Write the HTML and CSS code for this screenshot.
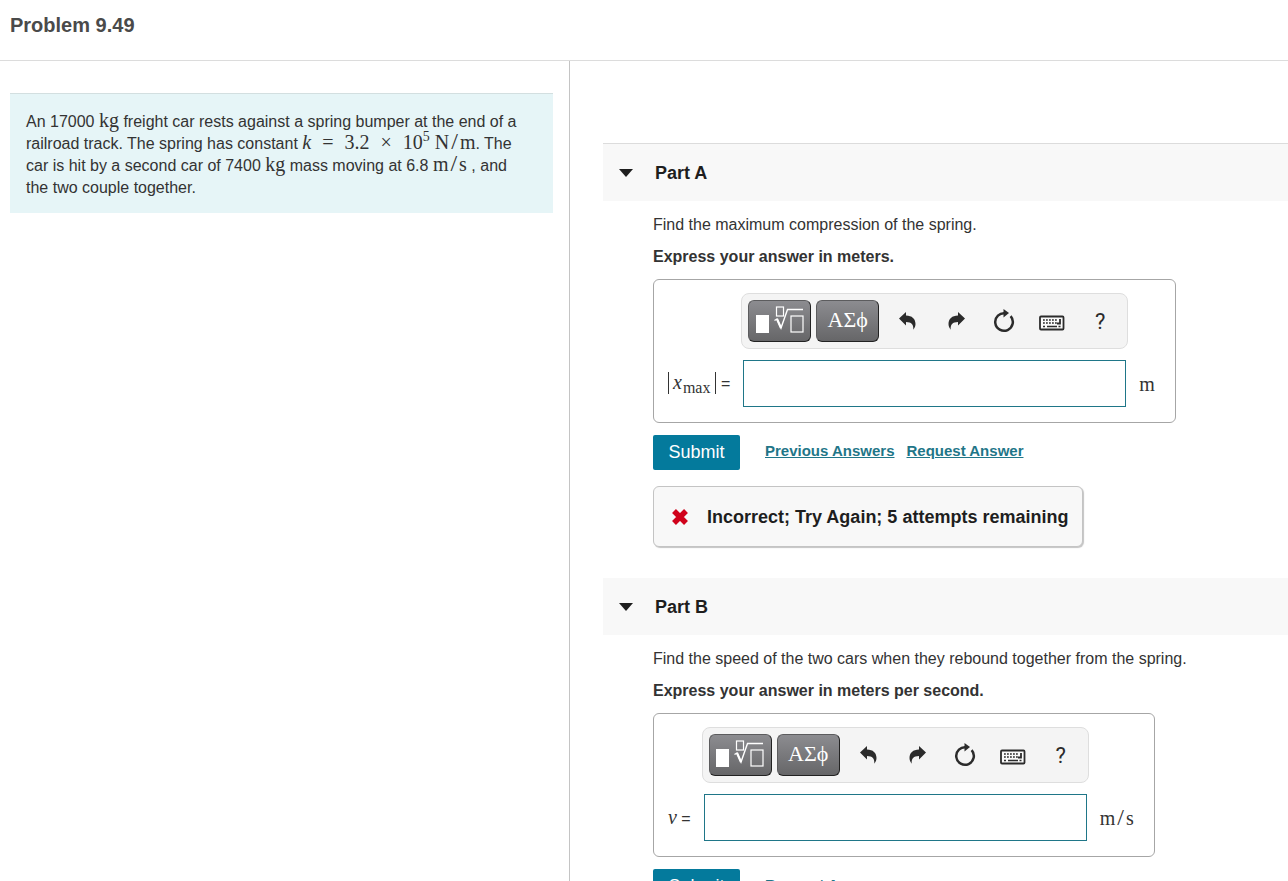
FILE: index.html
```html
<!DOCTYPE html>
<html lang="en">
<head>
  <meta charset="UTF-8" />
  <meta name="viewport" content="width=device-width, initial-scale=1.0" />
  <title>Problem 9.49</title>
  <link rel="stylesheet" href="styles.css">
</head>

<body>
  <!-- shared icons -->
  <svg class="sprite" aria-hidden="true">
    <symbol id="i-root" viewBox="0 0 48 28">
      <rect x="0" y="9" width="13" height="18" fill="#fff" />
      <rect x="20.5" y="1" width="7" height="9" fill="none" stroke="#fff" stroke-width="1.2" />
      <path d="M18.5 14.5l2.5-1.5 4 9L31.500 3.500H47" fill="none" stroke="#fff" stroke-width="1.4" />
      <path d="M21 13l4 9" stroke="#fff" stroke-width="2.2" />
      <rect x="35" y="10" width="12" height="16" fill="none" stroke="#fff" stroke-width="1.2" />
    </symbol>
    <symbol id="i-undo" viewBox="0 0 20 20">
      <path d="M1 7.500L8 1v3.500c6 0 9.500 3.500 9.500 8.500 0 2-.8 4-2.200 5.700.5-5-1.800-7.700-7.300-7.700v3.500z" fill="#2b2b2b" />
    </symbol>
    <symbol id="i-redo" viewBox="0 0 20 20">
      <path d="M19 7.500L12 1v3.500c-6 0-9.500 3.500-9.500 8.500 0 2 .8 4 2.200 5.700-.5-5 1.800-7.700 7.300-7.700v3.500z" fill="#2b2b2b" />
    </symbol>
    <symbol id="i-reset" viewBox="0 0 22 24">
      <path d="M16.500 6.100A8.800 8.800 0 1 1 11 4.200" fill="none" stroke="#2b2b2b" stroke-width="2.500" transform="rotate(10 11 13)" />
      <path d="M10.500 0l5.500 4-5.500 4.500z" fill="#2b2b2b" />
    </symbol>
    <symbol id="i-keyboard" viewBox="0 0 26 16">
      <rect x="1" y="1.500" width="23.500" height="13" rx="1" fill="#fafafa" stroke="#2b2b2b" stroke-width="1.800" />
      <path d="M4 5h15M4 8h15" stroke="#2b2b2b" stroke-width="1.600" stroke-dasharray="1.800 1.200" />
      <path d="M4 11.500h2M8 11.500h10M19.500 11.500h2" stroke="#2b2b2b" stroke-width="1.500" />
      <path d="M21 4v4.500h-3" fill="none" stroke="#2b2b2b" stroke-width="1.800" />
    </symbol>
    <symbol id="i-cross" viewBox="0 0 18 18">
      <path d="M3 3l12 12M15 3L3 15" stroke="#d0021b" stroke-width="5.500" />
    </symbol>
  </svg>

  <header class="top">
    <h1>Problem 9.49</h1>
  </header>

  <main class="panes">
    <section class="left">
      <div class="problem">
        An 17000 <span class="math">kg</span> freight car rests against a spring bumper at the end of a
        railroad track. The spring has constant <span class="math"><i>k</i><span class="op">=</span>3.2<span class="op">×</span>10<sup>5</sup> N<span class="slash">/</span>m</span>. The
        car is hit by a second car of 7400 <span class="math">kg</span> mass moving at 6.8 <span class="math">m<span class="slash">/</span>s</span> , and
        the two couple together.
      </div>
    </section>

    <section class="right">
      <article class="part">
        <h2 class="part-head"><span class="caret"></span>Part A</h2>
        <div class="part-body">
          <p>Find the maximum compression of the spring.</p>
          <p><strong>Express your answer in meters.</strong></p>

          <form class="answer">
            <div class="toolbar">
              <button type="button" class="key" aria-label="Templates"><svg width="48" height="28"><use href="#i-root" /></svg></button>
              <button type="button" class="key">ΑΣϕ</button>
              <div class="tools">
                <button type="button" aria-label="Undo"><svg width="20" height="20"><use href="#i-undo" /></svg></button>
                <button type="button" aria-label="Redo"><svg width="20" height="20"><use href="#i-redo" /></svg></button>
                <button type="button" aria-label="Reset"><svg width="22" height="24"><use href="#i-reset" /></svg></button>
                <button type="button" class="kbd" aria-label="Keyboard"><svg width="26" height="16"><use href="#i-keyboard" /></svg></button>
                <button type="button" class="help">?</button>
              </div>
            </div>
            <label for="xmax"><span class="abs"><i>x</i><sub>max</sub></span> =</label>
            <input type="text" id="xmax">
            <span class="unit">m</span>
          </form>

          <div class="actions">
            <button type="button" class="submit">Submit</button>
            <a href="#">Previous Answers</a>
            <a href="#">Request Answer</a>
          </div>

          <div class="feedback">
            <svg width="18" height="18"><use href="#i-cross" /></svg>
            Incorrect; Try Again; 5 attempts remaining
          </div>
        </div>
      </article>

      <article class="part">
        <h2 class="part-head"><span class="caret"></span>Part B</h2>
        <div class="part-body">
          <p>Find the speed of the two cars when they rebound together from the spring.</p>
          <p><strong>Express your answer in meters per second.</strong></p>

          <form class="answer">
            <div class="toolbar">
              <button type="button" class="key" aria-label="Templates"><svg width="48" height="28"><use href="#i-root" /></svg></button>
              <button type="button" class="key">ΑΣϕ</button>
              <div class="tools">
                <button type="button" aria-label="Undo"><svg width="20" height="20"><use href="#i-undo" /></svg></button>
                <button type="button" aria-label="Redo"><svg width="20" height="20"><use href="#i-redo" /></svg></button>
                <button type="button" aria-label="Reset"><svg width="22" height="24"><use href="#i-reset" /></svg></button>
                <button type="button" class="kbd" aria-label="Keyboard"><svg width="26" height="16"><use href="#i-keyboard" /></svg></button>
                <button type="button" class="help">?</button>
              </div>
            </div>
            <label for="v"><i>v</i> =</label>
            <input type="text" id="v">
            <span class="unit">m<span class="slash">/</span>s</span>
          </form>

          <div class="actions">
            <button type="button" class="submit">Submit</button>
            <a href="#">Request Answer</a>
          </div>
        </div>
      </article>
    </section>
  </main>
</body>
</html>
```
FILE: styles.css
```css
* {
  box-sizing: border-box;
}

body {
  margin: 0;
  height: 100vh;
  display: flex;
  flex-direction: column;
  overflow: hidden;
  background-color: #fff;
  color: #333;
  font-family: "Liberation Sans", Arial, sans-serif;
  font-size: 16px;
  line-height: 22px;
}

h1, h2, p {
  margin: 0;
}

button {
  font-family: inherit;
  border: none;
  padding: 0;
  cursor: pointer;
}

.sprite {
  display: none;
}

.top {
  padding: 14px 10px 24px;
  border-bottom: 1px solid #dcdcdc;
}

.top h1 {
  font-size: 20px;
  color: #4a4a4a;
}

.panes {
  flex: 1;
  min-height: 0;
  display: grid;
  grid-template-columns: 570fr 718fr;
}

.left {
  border-right: 1px solid #c4c4c4;
  padding: 32px 16px 0 10px;
}

.problem {
  background-color: #e6f5f7;
  border-top: 1px solid #d3dfe0;
  padding: 17px 24px 14px 16px;
}

.math, .unit, .answer label i, .answer sub {
  font-family: "Liberation Serif", "Times New Roman", serif;
}

.math {
  font-size: 20px;
  line-height: 0;
  white-space: nowrap;
}

.math sup {
  font-size: 14px;
}

.op {
  padding: 0 11px;
}

.slash {
  padding: 0 2px;
  font-size: 24px;
  line-height: 0;
}

.right {
  padding: 82px 0 0 33px;
  overflow: hidden;
}

.part {
  margin-bottom: 31px;
}

.part-head {
  display: flex;
  align-items: center;
  gap: 22px;
  height: 57px;
  padding-left: 16px;
  background-color: #f8f8f8;
  color: #1e1e1e;
  font-size: 18px;
}

.part:first-child .part-head {
  height: 58px;
  border-top: 1px solid #dcdcdc;
}

.caret {
  border: 7px solid transparent;
  border-top: 8px solid #1e1e1e;
  border-bottom: none;
}

.part-body {
  display: flex;
  flex-direction: column;
  align-items: flex-start;
  padding: 13px 0 0 50px;
}

.part-body p {
  margin-bottom: 10px;
}

.answer {
  display: grid;
  grid-template-columns: auto auto auto;
  column-gap: 11px;
  row-gap: 11px;
  align-items: center;
  margin-top: 1px;
  padding: 13px 20px 15px 14px;
  border: 1px solid #a6a6a6;
  border-radius: 6px;
}

.toolbar {
  grid-column: 2;
  display: flex;
  gap: 5px;
  padding: 6px 3px 6px 6px;
  background-color: #f4f4f4;
  border: 1px solid #dedede;
  border-radius: 8px;
}

.key {
  display: flex;
  align-items: center;
  justify-content: center;
  width: 63px;
  height: 42px;
  padding-bottom: 2px;
  border: 1px solid #5c5c5e;
  border-right-color: #222;
  border-bottom-color: #222;
  border-radius: 6px;
  background: linear-gradient(#8c8c90, #666668);
  color: #fff;
  font-family: "Liberation Serif", serif;
  font-size: 22px;
}

.tools {
  display: flex;
}

.tools button {
  display: flex;
  align-items: center;
  justify-content: center;
  width: 48px;
  background: none;
  color: #2b2b2b;
}

.tools .kbd {
  padding-top: 4px;
}

.tools .help {
  font-family: Roboto, sans-serif;
  font-size: 22px;
}

.answer label {
  grid-column: 1;
  white-space: nowrap;
}

.answer label i {
  font-size: 20px;
}

.answer sub {
  padding: 0 1px;
  font-size: 16px;
  line-height: 0;
}

.abs {
  display: inline-block;
  border: solid #333;
  border-width: 0 1px;
  padding: 0 4px;
  line-height: 20px;
}

.answer input {
  height: 47px;
  margin: 0 2px;
  padding: 0 10px;
  border: 1px solid #1f7688;
  font-size: 18px;
}

.unit {
  font-size: 20px;
}

.actions {
  display: flex;
  align-items: center;
  margin-top: 12px;
}

.submit {
  width: 87px;
  height: 35px;
  margin-right: 25px;
  background-color: #047a9c;
  border-radius: 2px;
  color: #fff;
  font-size: 18px;
}

.actions a {
  margin-right: 12px;
  padding-bottom: 3px;
  color: #1f7688;
  font-size: 15px;
  font-weight: bold;
}

.feedback {
  display: flex;
  align-items: center;
  gap: 18px;
  margin-top: 16px;
  padding: 19px 14px 18px 17px;
  background-color: #f8f8f8;
  border: 1px solid #c4c4c4;
  border-radius: 6px;
  box-shadow: 1px 1px 1px #c4c4c4;
  color: #1e1e1e;
  font-size: 18px;
  font-weight: bold;
}
```
